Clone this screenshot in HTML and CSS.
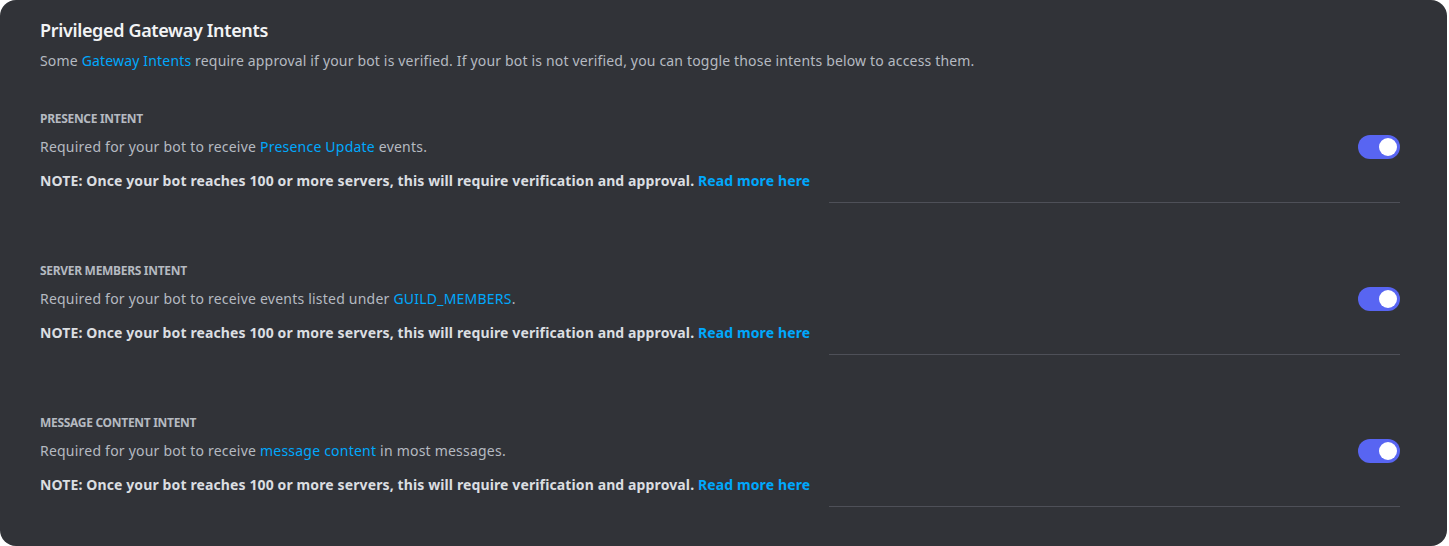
FILE: index.html
```html
<!DOCTYPE html>
<html lang="en">
<head>
<meta charset="utf-8">
<title>Privileged Gateway Intents</title>
<link rel="stylesheet" href="styles.css">
</head>
<body>
<div class="card">
  <h2 class="title">Privileged Gateway Intents</h2>
  <p class="desc">Some <a class="link" href="#">Gateway Intents</a> require approval if your bot is verified. If your bot is not verified, you can toggle those intents below to access them.</p>
  <div class="intents">
    <section class="intent">
      <div class="intent-row">
        <div class="intent-text">
          <h3 class="label">Presence Intent</h3>
          <p class="body">Required for your bot to receive <a class="link" href="#">Presence Update</a> events.</p>
          <p class="note">NOTE: Once your bot reaches 100 or more servers, this will require verification and approval. <a class="link" href="#">Read more here</a></p>
        </div>
        <div class="toggle"><span class="knob"></span></div>
      </div>
      <div class="divider"></div>
    </section>
    <section class="intent">
      <div class="intent-row">
        <div class="intent-text">
          <h3 class="label">Server Members Intent</h3>
          <p class="body">Required for your bot to receive events listed under <a class="link" href="#">GUILD_MEMBERS</a>.</p>
          <p class="note">NOTE: Once your bot reaches 100 or more servers, this will require verification and approval. <a class="link" href="#">Read more here</a></p>
        </div>
        <div class="toggle"><span class="knob"></span></div>
      </div>
      <div class="divider"></div>
    </section>
    <section class="intent">
      <div class="intent-row">
        <div class="intent-text">
          <h3 class="label">Message Content Intent</h3>
          <p class="body">Required for your bot to receive <a class="link" href="#">message content</a> in most messages.</p>
          <p class="note">NOTE: Once your bot reaches 100 or more servers, this will require verification and approval. <a class="link" href="#">Read more here</a></p>
        </div>
        <div class="toggle"><span class="knob"></span></div>
      </div>
      <div class="divider"></div>
    </section>
  </div>
</div>
</body>
</html>
```
FILE: styles.css
```css
* { box-sizing: border-box; }
html, body { margin: 0; padding: 0; background: #ffffff; }
body {
  font-family: "Noto Sans", "Open Sans", sans-serif;
  color: #dbdee1;
}
.card {
  width: 1447px;
  height: 546px;
  background: #313338;
  border-radius: 16px;
  padding: 18px 47px 0 40px;
  display: flex;
  flex-direction: column;
}
.title {
  margin: 0;
  font-size: 18px;
  line-height: 24px;
  font-weight: 600;
  color: #f2f3f5;
  letter-spacing: -0.35px;
}
.desc {
  margin: 9px 0 0;
  font-size: 14px;
  line-height: 20px;
  color: #b5bac1;
  letter-spacing: 0.17px;
}
.link { color: #00a8fc; text-decoration: none; }
.intents {
  display: flex;
  flex-direction: column;
  gap: 60px;
  margin-top: 40px;
}
.intent { display: flex; flex-direction: column; }
.intent-row {
  display: flex;
  align-items: center;
  justify-content: space-between;
}
.label {
  margin: 0;
  font-size: 12px;
  line-height: 16px;
  font-weight: 700;
  text-transform: uppercase;
  color: #b5bac1;
  letter-spacing: -0.3px;
}
.body {
  margin: 10px 0 0;
  font-size: 14px;
  line-height: 20px;
  color: #b5bac1;
  letter-spacing: 0.22px;
}
.note {
  margin: 14px 0 0;
  font-size: 14px;
  line-height: 20px;
  font-weight: 700;
  color: #dbdee1;
  letter-spacing: 0.12px;
}
.note .link { font-weight: 700; }
.toggle {
  width: 42px;
  height: 24px;
  border-radius: 12px;
  background: #5865f2;
  display: flex;
  align-items: center;
  justify-content: flex-end;
  padding: 0 3px;
  margin-top: -8px;
}
.knob {
  width: 18px;
  height: 18px;
  border-radius: 50%;
  background: #ffffff;
}
.divider {
  margin: 11px 0 0 auto;
  width: 571px;
  height: 1px;
  background: #4e5058;
}
```
